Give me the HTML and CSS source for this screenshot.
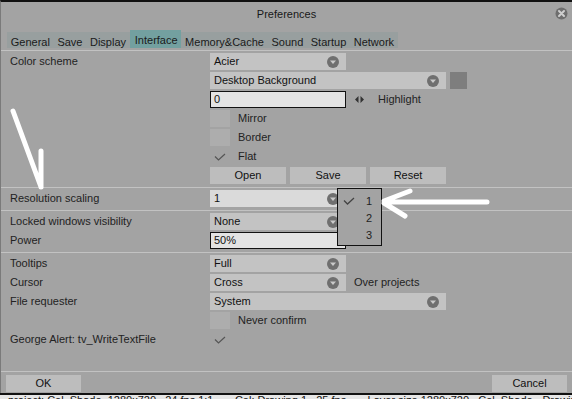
FILE: index.html
```html
<!DOCTYPE html>
<html lang="en">
<head>
  <meta charset="UTF-8">
  <title>Preferences</title>
  <link rel="stylesheet" href="styles.css">
</head>
<body>
  <div class="window">
    <header class="titlebar">
      <span class="title">Preferences</span>
      <svg class="close" width="13" height="13" viewBox="0 0 13 13">
        <circle cx="6.5" cy="6.5" r="6" fill="#6e6e6e"/>
        <path d="M4 4 L9 9 M9 4 L4 9" stroke="#cfcfcf" stroke-width="2" stroke-linecap="round"/>
      </svg>
    </header>

    <nav class="tabs">
      <span class="tab">General</span>
      <span class="tab">Save</span>
      <span class="tab">Display</span>
      <span class="tab active">Interface</span>
      <span class="tab">Memory&amp;Cache</span>
      <span class="tab">Sound</span>
      <span class="tab">Startup</span>
      <span class="tab">Network</span>
    </nav>

    <section class="section">
      <div class="row">
        <span class="label">Color scheme</span>
        <span class="select">Acier<svg class="arrow" viewBox="0 0 12 12"><circle cx="6" cy="6" r="6"/><path d="M3 4.5 H9 L6 8 Z"/></svg></span>
      </div>
      <div class="row">
        <span class="label"></span>
        <span class="select wide">Desktop Background<svg class="arrow" viewBox="0 0 12 12"><circle cx="6" cy="6" r="6"/><path d="M3 4.5 H9 L6 8 Z"/></svg></span>
        <span class="swatch"></span>
      </div>
      <div class="row">
        <span class="label"></span>
        <span class="field">0</span>
        <svg class="spin" width="9" height="7" viewBox="0 0 9 7"><path d="M0 3.5 L3.5 0 V7 Z M9 3.5 L5.5 0 V7 Z" fill="#333"/></svg>
        <span class="extra">Highlight</span>
      </div>
      <div class="row">
        <span class="label"></span>
        <span class="check"></span><span class="check-label">Mirror</span>
      </div>
      <div class="row">
        <span class="label"></span>
        <span class="check"></span><span class="check-label">Border</span>
      </div>
      <div class="row">
        <span class="label"></span>
        <span class="check on"><svg width="12" height="8" viewBox="0 0 12 8"><path d="M1 3.5 L4.5 7 L11 1" fill="none" stroke="#555" stroke-width="1.2"/></svg></span><span class="check-label">Flat</span>
      </div>
      <div class="row">
        <span class="label"></span>
        <span class="btn">Open</span>
        <span class="btn">Save</span>
        <span class="btn">Reset</span>
      </div>
    </section>

    <section class="section">
      <div class="row">
        <span class="label">Resolution scaling</span>
        <span class="select light">1<svg class="arrow" viewBox="0 0 12 12"><circle cx="6" cy="6" r="6"/><path d="M3 4.5 H9 L6 8 Z"/></svg></span>
      </div>
    </section>

    <section class="section">
      <div class="row">
        <span class="label">Locked windows visibility</span>
        <span class="select">None<svg class="arrow" viewBox="0 0 12 12"><circle cx="6" cy="6" r="6"/><path d="M3 4.5 H9 L6 8 Z"/></svg></span>
      </div>
      <div class="row">
        <span class="label">Power</span>
        <span class="field">50%</span>
      </div>
    </section>

    <section class="section last">
      <div class="row">
        <span class="label">Tooltips</span>
        <span class="select">Full<svg class="arrow" viewBox="0 0 12 12"><circle cx="6" cy="6" r="6"/><path d="M3 4.5 H9 L6 8 Z"/></svg></span>
      </div>
      <div class="row">
        <span class="label">Cursor</span>
        <span class="select">Cross<svg class="arrow" viewBox="0 0 12 12"><circle cx="6" cy="6" r="6"/><path d="M3 4.5 H9 L6 8 Z"/></svg></span>
        <span class="extra near">Over projects</span>
      </div>
      <div class="row">
        <span class="label">File requester</span>
        <span class="select wide">System<svg class="arrow" viewBox="0 0 12 12"><circle cx="6" cy="6" r="6"/><path d="M3 4.5 H9 L6 8 Z"/></svg></span>
      </div>
      <div class="row">
        <span class="label"></span>
        <span class="check"></span><span class="check-label">Never confirm</span>
      </div>
      <div class="row">
        <span class="label">George Alert: tv_WriteTextFile</span>
        <span class="check on"><svg width="12" height="8" viewBox="0 0 12 8"><path d="M1 3.5 L4.5 7 L11 1" fill="none" stroke="#555" stroke-width="1.2"/></svg></span>
      </div>
    </section>

    <footer class="footer">
      <span class="btn">OK</span>
      <span class="btn">Cancel</span>
    </footer>
  </div>

  <div class="statusbar">project: Cel_Shade_1280x720 &nbsp; 24 fps 1:1 &nbsp;&nbsp;&nbsp;&nbsp;&nbsp; Cel: Drawing 1 &nbsp; 25 fps &nbsp;&nbsp;&nbsp;&nbsp;&nbsp; Layer size 1280x720 &nbsp; Cel_Shade - Drawing</div>

  <!-- popup menu opened on Resolution scaling -->
  <div class="popup">
    <div class="item"><svg width="12" height="8" viewBox="0 0 12 8"><path d="M1 3.5 L4.5 7 L11 1" fill="none" stroke="#444" stroke-width="1.3"/></svg><span>1</span></div>
    <div class="item"><i></i><span>2</span></div>
    <div class="item"><i></i><span>3</span></div>
  </div>

  <!-- hand drawn annotation arrows -->
  <svg class="marks" width="572" height="399" viewBox="0 0 572 399">
    <g stroke="#fff" stroke-width="5" stroke-linecap="round" fill="none">
      <path d="M13 111 L41 187 M41 151 L41 187"/>
      <path d="M487 202 L384 202 M384 201 L410 191 M384 203 L405 216"/>
    </g>
  </svg>
</body>
</html>
```

FILE: styles.css
```css
body {
  margin: 0;
  width: 572px;
  height: 399px;
  overflow: hidden;
  position: relative;
  background: #a3a3a3;
  color: #1c1c1c;
  font: 11px "Liberation Sans", Arial, sans-serif;
}

.window {
  height: 393px;
  box-sizing: border-box;
  border-top: 2px solid #111;
  border-left: 1px solid #7a7a7a;
  display: flex;
  flex-direction: column;
}

.titlebar {
  height: 23px;
  margin-bottom: 1px;
  position: relative;
  display: flex;
  align-items: center;
  justify-content: center;
  color: #181818;
}

.close {
  position: absolute;
  right: 4px;
  top: 5px;
}

.tabs {
  display: flex;
  align-items: flex-end;
  height: 18px;
  margin: 4px 0 2px 6px;
}

.tab {
  box-sizing: border-box;
  height: 16px;
  padding: 4px 3.75px 0;
  line-height: 12px;
  background: #989f9f;
  color: #1a1a1a;
}

.tab.active {
  height: 18px;
  padding-left: 5px;
  background: #73a0a0;
}

.section {
  display: flex;
  flex-direction: column;
  gap: 2px;
  padding: 2px 0 3px 9px;
  border-top: 1px solid #c2c2c2;
}

.section.last {
  padding-bottom: 23px;
}

.row {
  display: flex;
  align-items: center;
  height: 17px;
  line-height: 17px;
  position: relative;
}

.label {
  width: 200px;
  flex: none;
  color: #222;
}

.select {
  box-sizing: border-box;
  width: 136px;
  height: 17px;
  padding: 0 7px 0 4px;
  background: #c3c3c3;
  display: flex;
  align-items: center;
  justify-content: space-between;
  color: #111;
}

.select.wide {
  width: 236px;
}

.select.light {
  background: #dadada;
}

.arrow {
  width: 12px;
  height: 12px;
}

.arrow circle {
  fill: #6f6f6f;
}

.arrow path {
  fill: #cacaca;
}

.swatch {
  width: 17px;
  height: 17px;
  margin-left: 4px;
  background: #7e7e7e;
}

.field {
  box-sizing: border-box;
  width: 136px;
  height: 17px;
  padding-left: 3px;
  line-height: 15px;
  border: 1px solid #111;
  background: #e3e3e3;
  color: #111;
}

.spin {
  margin-left: 9px;
}

.extra {
  margin-left: 14px;
  color: #222;
}

.extra.near {
  margin-left: 8px;
}

.check {
  width: 20px;
  height: 17px;
  background: #adadad;
  display: flex;
  align-items: center;
  justify-content: center;
}

.check.on {
  background: none;
}

.check-label {
  margin-left: 8px;
  color: #222;
}

.btn {
  width: 76px;
  height: 17px;
  margin-right: 4px;
  background: #bdbdbd;
  text-align: center;
  color: #111;
}

.footer {
  display: flex;
  justify-content: space-between;
  padding: 3px 5px 1px 5px;
  border-top: 1px solid #c2c2c2;
}

.footer .btn {
  width: 75px;
  line-height: 17px;
  margin: 0;
}

.statusbar {
  height: 6px;
  box-sizing: border-box;
  border-top: 2px solid #111;
  background: #e6e6e6;
  overflow: hidden;
  white-space: nowrap;
  padding-left: 8px;
  line-height: 11px;
  color: #111;
}

.popup {
  position: absolute;
  left: 337px;
  top: 188px;
  width: 43px;
  padding: 3px 0 2px;
  border: 1px solid #111;
  background: #a3a3a3;
}

.item {
  height: 17px;
  display: flex;
  align-items: center;
  padding-left: 5px;
  color: #222;
}

.item svg,
.item i {
  width: 12px;
  flex: none;
}

.item span {
  margin-left: 11px;
}

.marks {
  position: absolute;
  left: 0;
  top: 0;
  pointer-events: none;
}
```
